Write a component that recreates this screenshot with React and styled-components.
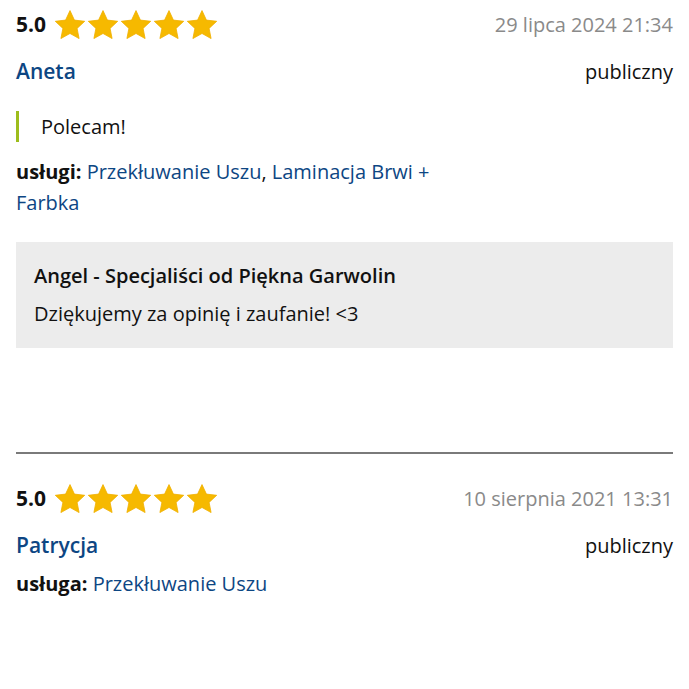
import React from "react";
import styled, { createGlobalStyle } from "styled-components";

const Global = createGlobalStyle`
  html, body { margin: 0; padding: 0; background: #fff; }
  body { font-family: "Open Sans", "Noto Sans", sans-serif; color: #111; }
`;

const Page = styled.div`
  padding: 0 16px;
  display: flex;
  flex-direction: column;
`;

const Review = styled.section`
  display: flex;
  flex-direction: column;
  padding-top: ${(p) => p.$top}px;
  padding-bottom: ${(p) => p.$bottom}px;
`;

const HeadRow = styled.div`
  display: flex;
  align-items: center;
  justify-content: space-between;
  height: 48px;
`;

const Rating = styled.div`
  display: flex;
  align-items: center;
  gap: 9px;
`;

const Score = styled.span`
  font-size: 21px;
  font-weight: 700;
  color: #111;
`;

const Stars = styled.div`
  display: flex;
  gap: 3px;
`;

const DateText = styled.span`
  font-size: 20px;
  color: #8a8a8a;
`;

const NameRow = styled.div`
  display: flex;
  align-items: center;
  justify-content: space-between;
  height: 46px;
`;

const Name = styled.span`
  font-size: 21px;
  font-weight: 600;
  color: #0d4683;
`;

const Visibility = styled.span`
  font-size: 20px;
  color: #111;
`;

const Quote = styled.blockquote`
  margin: 17px 0 0;
  border-left: 3px solid #9dbd1c;
  padding: 0 0 0 22px;
  font-size: 20px;
  line-height: 31px;
  color: #111;
`;

const Services = styled.p`
  margin: ${(p) => p.$top}px 0 0;
  max-width: 440px;
  font-size: 20px;
  line-height: 31px;
  color: #111;
`;

const Label = styled.b`
  font-weight: 700;
`;

const Link = styled.a`
  color: #0d4683;
  text-decoration: none;
`;

const Reply = styled.div`
  margin-top: 24px;
  background: #ececec;
  padding: 19px 18px 19px;
  display: flex;
  flex-direction: column;
  gap: 8px;
`;

const ReplyTitle = styled.div`
  font-size: 20px;
  font-weight: 600;
  line-height: 30px;
  color: #111;
`;

const ReplyText = styled.div`
  font-size: 20px;
  line-height: 30px;
  color: #111;
`;

const Divider = styled.hr`
  margin: 0;
  border: 0;
  border-top: 2px solid #7a7a7a;
`;

const Star = () => (
  <svg width="30" height="29" viewBox="0.8 0.4 22.4 21.6">
    <path
      d="M12 0.8l3.3 7.1 7.7.9-5.7 5.3 1.5 7.6L12 17.9l-6.8 3.8 1.5-7.6L1 8.8l7.7-.9z"
      fill="#f6b900"
      stroke="#f0b000"
      strokeWidth="0.6"
      strokeLinejoin="round"
    />
  </svg>
);

const FiveStars = () => (
  <Stars>
    {[0, 1, 2, 3, 4].map((i) => (
      <Star key={i} />
    ))}
  </Stars>
);

export default function App() {
  return (
    <Page>
      <Global />
      <Review $top={0} $bottom={104}>
        <HeadRow>
          <Rating>
            <Score>5.0</Score>
            <FiveStars />
          </Rating>
          <DateText>29 lipca 2024 21:34</DateText>
        </HeadRow>
        <NameRow>
          <Name>Aneta</Name>
          <Visibility>publiczny</Visibility>
        </NameRow>
        <Quote>Polecam!</Quote>
        <Services $top={14}>
          <Label>usługi:</Label> <Link href="#">Przekłuwanie Uszu</Link>,{" "}
          <Link href="#">Laminacja Brwi + Farbka</Link>
        </Services>
        <Reply>
          <ReplyTitle>Angel - Specjaliści od Piękna Garwolin</ReplyTitle>
          <ReplyText>Dziękujemy za opinię i zaufanie! &lt;3</ReplyText>
        </Reply>
      </Review>
      <Divider />
      <Review $top={20} $bottom={40}>
        <HeadRow>
          <Rating>
            <Score>5.0</Score>
            <FiveStars />
          </Rating>
          <DateText>10 sierpnia 2021 13:31</DateText>
        </HeadRow>
        <NameRow>
          <Name>Patrycja</Name>
          <Visibility>publiczny</Visibility>
        </NameRow>
        <Services $top={0}>
          <Label>usługa:</Label> <Link href="#">Przekłuwanie Uszu</Link>
        </Services>
      </Review>
    </Page>
  );
}
